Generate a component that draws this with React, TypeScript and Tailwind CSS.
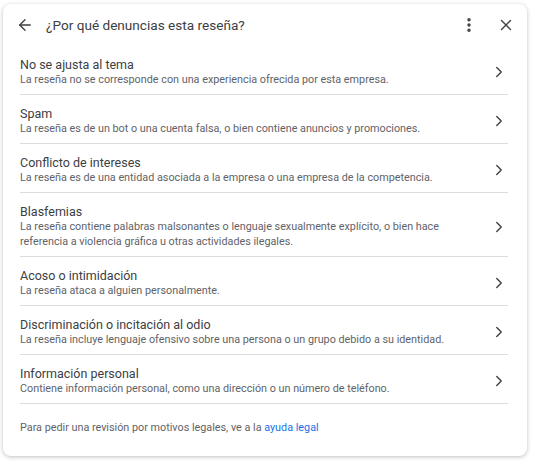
import { ArrowLeft, ChevronRight, EllipsisVertical, X } from "lucide-react";

const reasons = [
  {
    title: "No se ajusta al tema",
    desc: "La reseña no se corresponde con una experiencia ofrecida por esta empresa.",
  },
  {
    title: "Spam",
    desc: "La reseña es de un bot o una cuenta falsa, o bien contiene anuncios y promociones.",
  },
  {
    title: "Conflicto de intereses",
    desc: "La reseña es de una entidad asociada a la empresa o una empresa de la competencia.",
  },
  {
    title: "Blasfemias",
    desc: "La reseña contiene palabras malsonantes o lenguaje sexualmente explícito, o bien hace referencia a violencia gráfica u otras actividades ilegales.",
  },
  {
    title: "Acoso o intimidación",
    desc: "La reseña ataca a alguien personalmente.",
  },
  {
    title: "Discriminación o incitación al odio",
    desc: "La reseña incluye lenguaje ofensivo sobre una persona o un grupo debido a su identidad.",
  },
  {
    title: "Información personal",
    desc: "Contiene información personal, como una dirección o un número de teléfono.",
  },
];

const App = () => {
  return (
    <div className="w-[535px] h-[465px] bg-white font-['Roboto',sans-serif] pt-[4px] pl-[3px]">
      <div className="w-[524px] h-[452px] bg-white rounded-lg shadow-[0_1px_4px_rgba(0,0,0,0.25)]">
        {/* Header */}
        <div className="flex items-center h-[42px] pl-[13px] pr-[12px]">
          <ArrowLeft size={18} strokeWidth={1.8} className="text-[#3c4043]" />
          <div className="ml-[12px] text-[13.6px] text-[#3c4043] flex-1">¿Por qué denuncias esta reseña?</div>
          <EllipsisVertical size={18} strokeWidth={2.6} className="text-[#3c4043]" />
          <X size={18} strokeWidth={1.8} className="ml-[19px] text-[#3c4043]" />
        </div>

        {/* Reasons */}
        <div className="pl-[17px] pr-[19px]">
          {reasons.map((r) => (
            <div key={r.title} className="flex items-center border-b border-[#dadce0] pt-[11px] pb-[7px]">
              <div className="flex-1 pr-[40px]">
                <div className="text-[12.5px] leading-[15px] text-[#3c4043]">{r.title}</div>
                <div className="text-[10.8px] leading-[15px] text-[#5f6368]">{r.desc}</div>
              </div>
              <ChevronRight size={18} strokeWidth={1.8} className="text-[#3c4043]" />
            </div>
          ))}
        </div>

        {/* Footer */}
        <div className="pl-[17px] pt-[16px] text-[10.8px] leading-[15px] text-[#5f6368]">
          Para pedir una revisión por motivos legales, ve a la{" "}
          <span className="text-[#1a73e8]">ayuda legal</span>
        </div>
      </div>
    </div>
  );
};

export default App;
